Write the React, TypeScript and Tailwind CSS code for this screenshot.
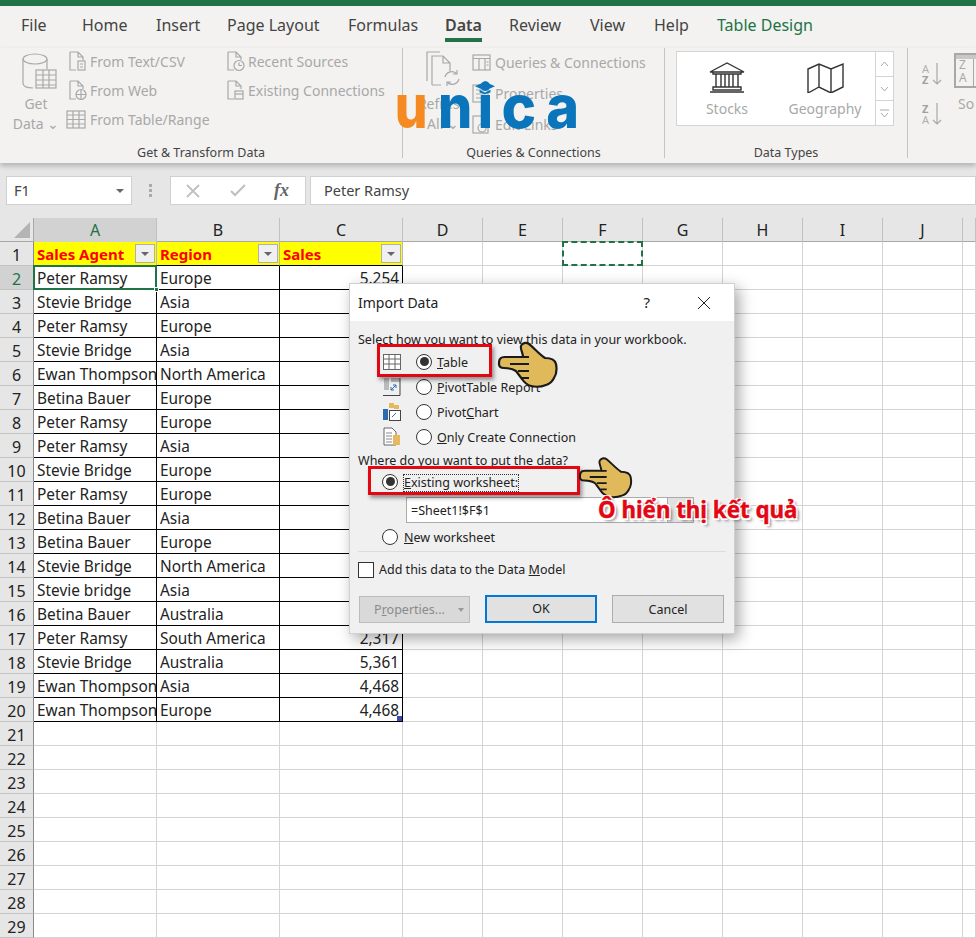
import type { ReactNode } from "react";

const FONT = "font-['Noto_Sans','Open_Sans',sans-serif]";

const GRID = "grid grid-cols-[34px_123px_123px_123px_80px_80px_80px_80px_80px_80px_80px_13px]";
const COLUMNS = ["A", "B", "C", "D", "E", "F", "G", "H", "I", "J", ""];

const ROWS: [string, string, string][] = [
  ["Peter Ramsy", "Europe", "5.254"],
  ["Stevie Bridge", "Asia", ""],
  ["Peter Ramsy", "Europe", ""],
  ["Stevie Bridge", "Asia", ""],
  ["Ewan Thompson", "North America", ""],
  ["Betina Bauer", "Europe", ""],
  ["Peter Ramsy", "Europe", ""],
  ["Peter Ramsy", "Asia", ""],
  ["Stevie Bridge", "Europe", ""],
  ["Peter Ramsy", "Europe", ""],
  ["Betina Bauer", "Asia", ""],
  ["Betina Bauer", "Europe", ""],
  ["Stevie Bridge", "North America", ""],
  ["Stevie bridge", "Asia", ""],
  ["Betina Bauer", "Australia", ""],
  ["Peter Ramsy", "South America", "2,317"],
  ["Stevie Bridge", "Australia", "5,361"],
  ["Ewan Thompson", "Asia", "4,468"],
  ["Ewan Thompson", "Europe", "4,468"],
];

const EMPTY_COLUMNS = ["D", "E", "F", "G", "H", "I", "J", "K"];
const ROW_COUNT = 29;

const TABS = [
  { label: "File", width: "w-[61px]" },
  { label: "Home", width: "w-[74px]" },
  { label: "Insert", width: "w-[71px]" },
  { label: "Page Layout", width: "w-[121px]" },
  { label: "Formulas", width: "w-[97px]" },
  { label: "Data", width: "w-[64px]", active: true },
  { label: "Review", width: "w-[81px]" },
  { label: "View", width: "w-[64px]" },
  { label: "Help", width: "w-[63px]" },
  { label: "Table Design", width: "w-[110px]", accent: true },
];

const LOGO_LETTERS = [
  { letter: "u", width: "w-[44px]", color: "text-[#f58a23]", scale: "scale-x-[0.86]" },
  { letter: "n", width: "w-[44px]", color: "", scale: "scale-x-[0.9]" },
  { letter: "i", width: "w-[16px]", color: "", scale: "scale-x-[0.9]" },
  { letter: "c", width: "w-[51px]", color: "", scale: "scale-x-[0.97]" },
  { letter: "a", width: "w-[38px]", color: "", scale: "scale-x-[0.93]" },
];

function PageIcon({ children }: { children?: ReactNode }) {
  return (
    <svg width="20" height="21" viewBox="0 0 20 21" fill="none" stroke="#a8a8a8" strokeWidth="1.2" className="shrink-0">
      <path d="M2 1h8l5 5v3M10 1v5h5M2 1v18h6" />
      {children}
    </svg>
  );
}

function RibbonItem({ icon, label }: { icon: ReactNode; label: string }) {
  return (
    <div className="flex items-center h-[29px] gap-[2px] text-[14px] text-[#a8a8a8] whitespace-nowrap">
      {icon}
      <span>{label}</span>
    </div>
  );
}

function GroupLabel({ children }: { children: ReactNode }) {
  return <div className="text-center text-[12.5px] leading-4 text-[#444] shrink-0">{children}</div>;
}

function Hand({ className }: { className: string }) {
  return (
    <svg viewBox="0 0 72 58" className={className}>
      <path
        d="M10 24c1-2 3-2 5-2h18c0-4-3-8-2-11 1-3 5-4 8-2 4 3 10 10 16 14 5 0 10 1 11 6 1 5 0 11-2 14-2 4-4 6-8 7-5 2-11 2-15 1-4-1-7-4-9-7l-6-8c-3-2-8-3-12-3-3 0-5-1-5-4 0-2 0-4 1-5z"
        fill="#e0b95b"
        stroke="#1a1a1a"
        strokeWidth="2.2"
      />
      <path d="M20 29h19M28 36h11M32 43h7M33 22h6" fill="none" stroke="#1a1a1a" strokeWidth="2" />
    </svg>
  );
}

function Radio({ checked }: { checked?: boolean }) {
  return (
    <span className="flex items-center justify-center w-4 h-4 rounded-full border border-[#333] bg-white shrink-0">
      {checked && <span className="w-[9px] h-[9px] rounded-full bg-[#333]" />}
    </span>
  );
}

function ViewOption({ icon, checked, children }: { icon: ReactNode; checked?: boolean; children: ReactNode }) {
  return (
    <div className="flex items-center h-[25px] pl-[33px] text-[#222]">
      <span className="flex justify-center w-[18px] mr-[15px]">{icon}</span>
      <Radio checked={checked} />
      <span className="ml-[5px] mt-[3px]">{children}</span>
    </div>
  );
}

function ImportDialog() {
  return (
    <div className="absolute left-[349px] top-[283px] w-[386px] h-[351px] bg-[#f0f0f0] border border-[#d0d0d0] shadow-[4px_5px_14px_rgba(0,0,0,0.35)] text-[12.5px] text-[#222]">
      <div className="flex items-center h-[37px] bg-white pl-[8px] text-[14px]">
        <span className="flex-1">Import Data</span>
        <span className="mr-[47px] text-[15px]">?</span>
        <svg width="14" height="14" viewBox="0 0 14 14" stroke="#222" className="mr-[23px]">
          <path d="M1 1l12 12M13 1L1 13" />
        </svg>
      </div>

      <div className="pl-[8px] pt-[10px] h-[27px]">Select how you want to view this data in your workbook.</div>
      <div className="mt-[1px]">
        <ViewOption
          checked
          icon={
            <svg width="18" height="16" viewBox="0 0 18 16" fill="#fff" stroke="#666">
              <rect x="0.5" y="0.5" width="17" height="15" />
              <path d="M0 5h18M0 10h18M6 0v16M12 0v16" />
            </svg>
          }
        >
          <u>T</u>able
        </ViewOption>
        <ViewOption
          icon={
            <svg width="18" height="18" viewBox="0 0 18 18" fill="none">
              <rect x="1" y="0" width="5" height="12" fill="#bbb" />
              <rect x="8" y="0" width="9" height="4" fill="#bbb" />
              <path d="M0 17.5h17V0" stroke="#444" />
              <path d="M8 12l5-5M10 7h3v3M8 9v3h3" stroke="#2b6cb0" />
            </svg>
          }
        >
          <u>P</u>ivotTable Report
        </ViewOption>
        <ViewOption
          icon={
            <svg width="18" height="18" viewBox="0 0 18 18" fill="none">
              <rect x="6" y="0" width="5" height="5" fill="#e8b85f" />
              <rect x="0" y="6" width="5" height="11" fill="#2b6cb0" />
              <rect x="11" y="2" width="5" height="4" fill="#e8b85f" />
              <rect x="6.5" y="7.5" width="11" height="10" fill="#fff" stroke="#444" />
              <path d="M9 14l4-4" stroke="#2b6cb0" />
            </svg>
          }
        >
          Pivot<u>C</u>hart
        </ViewOption>
        <ViewOption
          icon={
            <svg width="18" height="19" viewBox="0 0 18 19" fill="none">
              <path d="M1 1h8l4 4v13H1z" fill="#fff" stroke="#666" />
              <path d="M3 6h6M3 9h6M3 12h6M3 15h6" stroke="#888" />
              <rect x="10" y="8" width="7" height="10" fill="#e8b85f" />
            </svg>
          }
        >
          <u>O</u>nly Create Connection
        </ViewOption>
      </div>

      <div className="pl-[8px] h-[20px] leading-[24px]">Where do you want to put the data?</div>
      <div className="flex items-center h-[25px] pl-[32px]">
        <Radio checked />
        <span className="ml-[6px] mt-[3px] outline-1 outline-dotted outline-[#333] leading-[16px]">
          <u>E</u>xisting worksheet:
        </span>
      </div>
      <div className="flex items-center pl-[56px] mt-[3px]">
        <div className="flex items-center w-[262px] h-[26px] bg-white border border-[#aaa] pl-[4px] pt-[2px]">=Sheet1!$F$1</div>
        <div className="w-[26px] h-[26px] bg-[#e1e1e1] border border-l-0 border-[#aaa]" />
      </div>
      <div className="flex items-center h-[28px] pl-[32px]">
        <Radio />
        <span className="ml-[6px] mt-[3px]">
          <u>N</u>ew worksheet
        </span>
      </div>
      <div className="mx-[8px] border-t border-[#dcdcdc]" />
      <div className="flex items-center h-[35px] pl-[8px]">
        <span className="w-4 h-4 border border-[#333] bg-white shrink-0" />
        <span className="ml-[5px] mt-[2px]">
          Add this data to the Data <u>M</u>odel
        </span>
      </div>
      <div className="flex items-center mt-[8px] pl-[9px] gap-[15px]">
        <div className="flex items-center justify-center w-[111px] h-[27px] pt-[2px] bg-[#d9d9d9] border border-[#bcbcbc] text-[#8a8a8a] relative">
          <span className="mr-[10px]">
            P<u>r</u>operties...
          </span>
          <span className="absolute right-[5px] top-[11px] border-x-[3.5px] border-x-transparent border-t-[4px] border-t-[#999]" />
        </div>
        <div className="flex items-center justify-center w-[112px] h-[28px] pt-[1px] bg-[#e1e1e1] border-2 border-[#0078d7]">OK</div>
        <div className="flex items-center justify-center w-[112px] h-[28px] pt-[2px] bg-[#e1e1e1] border border-[#adadad]">Cancel</div>
      </div>
    </div>
  );
}

function Ribbon() {
  return (
    <div className="flex h-[115px] bg-[#f3f2f1] shadow-[0_3px_5px_rgba(0,0,0,0.22)] relative z-10">
      {/* Get & Transform Data */}
      <div className="w-[403px] h-[110px] border-r border-[#c4c4c4] flex flex-col shrink-0">
        <div className="flex h-[97px] shrink-0 pl-[12px]">
          <div className="w-[48px] flex flex-col items-center text-[14px] text-[#a8a8a8] leading-[20px]">
            <svg width="36" height="38" viewBox="0 0 36 38" fill="none" stroke="#a8a8a8" strokeWidth="1.2" className="mt-[4px] ml-[7px]">
              <ellipse cx="13" cy="7" rx="12" ry="5" />
              <path d="M1 7v24c0 3 4 5 10 5M25 7v10" />
              <rect x="14" y="18" width="20" height="18" fill="#f3f2f1" />
              <path d="M14 23h20M14 28h20M14 33h20M21 18v18M27 18v18" />
            </svg>
            <span className="mt-[4px]">Get</span>
            <span className="whitespace-nowrap">Data ⌄</span>
          </div>
          <div className="w-[158px] ml-[8px] -mt-px">
            <RibbonItem
              label="From Text/CSV"
              icon={
                <PageIcon>
                  <rect x="10" y="10" width="7" height="9" />
                  <path d="M12 13h3M12 16h3" />
                </PageIcon>
              }
            />
            <RibbonItem
              label="From Web"
              icon={
                <PageIcon>
                  <circle cx="13" cy="14.5" r="5" />
                  <path d="M8 14.5h10M13 9.5v10" />
                </PageIcon>
              }
            />
            <RibbonItem
              label="From Table/Range"
              icon={
                <svg width="20" height="19" viewBox="0 0 20 19" fill="none" stroke="#a8a8a8" strokeWidth="1.2" className="-ml-[2px] mr-[2px] shrink-0">
                  <rect x="1" y="1" width="18" height="17" />
                  <path d="M1 5h18M1 9.5h18M1 14h18M7 1v17M13 1v17" />
                </svg>
              }
            />
          </div>
          <div className="-mt-px">
            <RibbonItem
              label="Recent Sources"
              icon={
                <PageIcon>
                  <circle cx="13" cy="14.5" r="5" />
                  <path d="M13 11.5v3h3" />
                </PageIcon>
              }
            />
            <RibbonItem
              label="Existing Connections"
              icon={
                <PageIcon>
                  <rect x="9" y="11" width="8" height="8" />
                  <path d="M9 14h8" />
                </PageIcon>
              }
            />
          </div>
        </div>
        <GroupLabel>Get &amp; Transform Data</GroupLabel>
      </div>

      {/* Queries & Connections */}
      <div className="w-[262px] h-[110px] border-r border-[#c4c4c4] flex flex-col shrink-0">
        <div className="flex h-[97px] shrink-0 pl-[20px]">
          <div className="w-[40px] flex flex-col items-center text-[14px] text-[#a8a8a8] leading-[20px]">
            <svg width="36" height="38" viewBox="0 0 36 38" fill="none" stroke="#a8a8a8" strokeWidth="1.2" className="mt-[3px] ml-[2px]">
              <path d="M1 30V1h13M6 34V5h11l7 7v8M6 34h9M17 5v7h7" />
              <path d="M19 26a7 7 0 0 1 12-3M33 28a7 7 0 0 1-12 3M31 19v4h-4M21 35v-4h4" />
            </svg>
            <span className="mt-[5px]">Refresh</span>
            <span>All ⌄</span>
          </div>
          <div className="ml-[9px]">
            <div className="h-[31px]">
              <RibbonItem
                label="Queries & Connections"
                icon={
                  <svg width="20" height="17" viewBox="0 0 20 17" fill="none" stroke="#a8a8a8" strokeWidth="1.2" className="shrink-0 mr-[1px]">
                    <rect x="1" y="1" width="17" height="15" />
                    <path d="M1 4.5h17M7 4.5V16M13 4.5V16M14.5 8h2M14.5 11h2" />
                  </svg>
                }
              />
            </div>
            <div className="h-[31px]">
              <RibbonItem
                label="Properties"
                icon={
                  <svg width="20" height="19" viewBox="0 0 20 19" fill="none" stroke="#a8a8a8" strokeWidth="1.2" className="shrink-0 mr-[1px]">
                    <rect x="1" y="1" width="15" height="17" />
                    <path d="M4 6h9M4 10h9M4 14h9" />
                  </svg>
                }
              />
            </div>
            <RibbonItem
              label="Edit Links"
              icon={
                <svg width="20" height="19" viewBox="0 0 20 19" fill="none" stroke="#a8a8a8" strokeWidth="1.2" className="shrink-0 mr-[1px]">
                  <rect x="1" y="1" width="15" height="17" />
                  <circle cx="10" cy="13" r="4" />
                </svg>
              }
            />
          </div>
        </div>
        <GroupLabel>Queries &amp; Connections</GroupLabel>
      </div>

      {/* Data Types */}
      <div className="w-[243px] h-[110px] border-r border-[#c4c4c4] flex flex-col shrink-0">
        <div className="h-[97px] shrink-0 pl-[11px] pt-[3px]">
          <div className="flex w-[218px] h-[75px] bg-white border border-[#d4d4d4] text-[14px] text-[#a8a8a8]">
            <div className="flex w-[198px]">
              <div className="w-[98px] flex flex-col items-center pt-[10px] pl-[2px]">
                <svg width="36" height="31" viewBox="0 0 36 31" fill="none" stroke="#333" strokeWidth="1.4">
                  <path d="M1 10L18 1l17 9zM4 10v2h28v-2M7 12v13M12 12v13M16 12v13M20 12v13M24 12v13M29 12v13M4 25h28v3H4zM1 30h34" />
                </svg>
                <span className="mt-[5px]">Stocks</span>
              </div>
              <div className="w-[100px] flex flex-col items-center pt-[10px]">
                <svg width="37" height="31" viewBox="0 0 37 31" fill="none" stroke="#333" strokeWidth="1.4">
                  <path d="M1 7l11-5 12 5 12-5v23l-12 6-12-6-11 6zM12 2v23M24 7v24" />
                </svg>
                <span className="mt-[5px]">Geography</span>
              </div>
            </div>
            <div className="flex flex-col w-[18px] border-l border-[#d4d4d4] text-[#999]">
              <div className="flex-1 border-b border-[#d4d4d4] flex items-center justify-center">
                <svg width="9" height="6" viewBox="0 0 9 6" fill="none" stroke="#aaa"><path d="M1 5l3.5-4L8 5" /></svg>
              </div>
              <div className="flex-1 border-b border-[#d4d4d4] flex items-center justify-center">
                <svg width="9" height="6" viewBox="0 0 9 6" fill="none" stroke="#aaa"><path d="M1 1l3.5 4L8 1" /></svg>
              </div>
              <div className="flex-1 flex items-center justify-center">
                <svg width="9" height="9" viewBox="0 0 9 9" fill="none" stroke="#aaa"><path d="M0 1h9M1 4l3.5 4L8 4" /></svg>
              </div>
            </div>
          </div>
        </div>
        <GroupLabel>Data Types</GroupLabel>
      </div>

      {/* Sort & Filter, cut off by the window */}
      <div className="flex pl-[14px] overflow-hidden">
        <div className="w-[32px] shrink-0 pt-[14px]">
          <svg width="22" height="24" viewBox="0 0 22 24" fill="none">
            <text x="0" y="11" fontSize="11" fontFamily="Noto Sans" fill="#b0b0b0">A</text>
            <text x="0" y="22" fontSize="11" fontWeight="700" fontFamily="Noto Sans" fill="#a0a0a0">Z</text>
            <path d="M15 1v21M11 18l4 4 4-4" stroke="#a8a8a8" strokeWidth="1.2" />
          </svg>
          <svg width="22" height="24" viewBox="0 0 22 24" fill="none" className="mt-[16px]">
            <text x="0" y="11" fontSize="11" fontWeight="700" fontFamily="Noto Sans" fill="#a0a0a0">Z</text>
            <text x="0" y="22" fontSize="11" fontFamily="Noto Sans" fill="#b0b0b0">A</text>
            <path d="M15 1v21M11 18l4 4 4-4" stroke="#a8a8a8" strokeWidth="1.2" />
          </svg>
        </div>
        <div className="pt-[5px] text-[14px] text-[#a8a8a8] leading-[20px] shrink-0">
          <div className="w-[30px] h-[35px] border-2 border-[#a8a8a8] border-r-0 relative">
            <div className="h-[4px] bg-[#c8c8c8]" />
            <div className="text-[12px] leading-[12px] pl-[3px]">Z</div>
            <div className="text-[12px] leading-[13px] pl-[3px]">A</div>
            <div className="absolute left-[17px] top-[4px] bottom-0 border-l border-[#a8a8a8]" />
          </div>
          <div className="pl-[4px] mt-[6px]">So</div>
        </div>
      </div>
    </div>
  );
}

function Logo() {
  return (
    <div className="absolute left-[389px] top-[70px] z-20 flex font-['Inter',sans-serif] font-extrabold text-[60px] leading-[72px] text-[#0b75bb]">
      {LOGO_LETTERS.map((item) => (
        <span key={item.letter} className={`flex justify-center ${item.width} ${item.color}`}>
          <span className={`inline-block ${item.scale}`}>{item.letter}</span>
        </span>
      ))}
      <svg width="20" height="14" viewBox="0 0 22 14" className="absolute left-[86px] top-[11px]" fill="#0b75bb">
        <path d="M11 0l11 5-11 5L0 5zM5 9l6 3 6-3v3l-6 2-6-2z" />
      </svg>
    </div>
  );
}

function Sheet() {
  return (
    <div className="bg-white text-[15.4px] text-[#222] flex-1">
      <div className={`${GRID} h-6 bg-[#e6e6e6] border-b border-[#a8a8a8] text-[16px]`}>
        <div className="relative border-r border-[#a8a8a8]">
          <svg width="16" height="16" viewBox="0 0 16 16" className="absolute left-[14px] top-[4px]">
            <path d="M16 0v16H0z" fill="#b4b4b4" />
          </svg>
        </div>
        {COLUMNS.map((col, i) => (
          <div
            key={col + i}
            className={`flex items-center justify-center border-r border-[#c0c0c0] ${
              i === 0 ? "bg-[#d2d2d2] text-[#217346]" : ""
            }`}
          >
            {col}
          </div>
        ))}
      </div>

      {Array.from({ length: ROW_COUNT }, (_, r) => {
        const num = r + 1;
        const data = r >= 1 && r <= 19 ? ROWS[r - 1] : null;
        const headerRow = r === 0;
        const inTable = headerRow || data;
        const cellBorder = inTable ? "border-black" : "border-[#d4d4d4]";
        return (
          <div key={num} className={`${GRID} grid-rows-[24px] h-6 leading-[18px]`}>
            <div
              className={`flex items-center justify-center pt-[2px] border-r border-b border-r-[#8a8a8a] border-b-[#c4c4c4] text-[16px] ${
                num === 2 ? "bg-[#d2d2d2] text-[#217346]" : "bg-[#e6e6e6]"
              }`}
            >
              {num}
            </div>

            {headerRow &&
              ["Sales Agent", "Region", "Sales"].map((title) => (
                <div
                  key={title}
                  className="relative flex items-center pl-[3px] bg-[#ffff00] border-r border-b border-r-[#b8b8b8] border-b-black font-bold text-[15px] text-[#ff0000]"
                >
                  {title}
                  <span className="absolute right-[1px] top-[2px] flex items-center justify-center w-[20px] h-[19px] bg-[#f0f0f0] border border-[#b0b0b0]">
                    <span className="border-x-[4px] border-x-transparent border-t-[4px] border-t-[#666]" />
                  </span>
                </div>
              ))}

            {!headerRow && (
              <>
                <div className={`relative flex items-center pl-[3px] pt-[3px] border-r border-b ${cellBorder} whitespace-nowrap`}>
                  <span className="block w-[119px] h-[22px] leading-[22px] shrink-0 overflow-hidden">{data?.[0]}</span>
                  {num === 2 && (
                    <>
                      <span className="absolute -left-px -top-px -right-px -bottom-px border-2 border-[#217346]" />
                      <span className="absolute -right-[3px] -bottom-[3px] w-[5px] h-[5px] bg-[#217346] border border-white z-10" />
                    </>
                  )}
                </div>
                <div className={`flex items-center pl-[3px] pt-[3px] border-r border-b ${cellBorder} whitespace-nowrap`}>{data?.[1]}</div>
                <div className={`relative flex items-center justify-end pr-[3px] pt-[3px] border-r border-b ${cellBorder}`}>
                  {data?.[2]}
                  {num === 20 && <span className="absolute right-0 bottom-0 w-[5px] h-[5px] bg-[#3f48a8]" />}
                </div>
              </>
            )}

            {EMPTY_COLUMNS.map((col) => (
              <div key={col} className="relative border-r border-b border-[#d4d4d4]">
                {headerRow && col === "F" && (
                  <span className="absolute -left-px -top-px -right-px -bottom-px border-2 border-dashed border-[#217346]" />
                )}
              </div>
            ))}
          </div>
        );
      })}
    </div>
  );
}

export default function App() {
  return (
    <div className={`relative w-[976px] h-[938px] overflow-hidden bg-white flex flex-col ${FONT}`}>
      <div className="h-1.5 bg-[#217346]" />

      <div className="flex h-[42px] pl-[21px] pt-[7px] bg-[#f3f2f1] text-[16px] text-[#444]">
        {TABS.map((tab) => (
          <div key={tab.label} className={`${tab.width} shrink-0 whitespace-nowrap`}>
            <div className={`inline-block h-[28px] leading-[22px] ${tab.active ? "font-semibold border-b-[4px] border-[#217346]" : ""} ${tab.accent ? "text-[#217346]" : ""}`}>
              {tab.label}
            </div>
          </div>
        ))}
      </div>

      <Ribbon />

      <div className="flex items-center h-[55px] bg-[#e6e6e6] pl-[6px] text-[14.5px] text-[#444]">
        <div className="relative flex items-center w-[126px] h-[29px] bg-white border border-[#d0d0d0] pl-[7px]">
          F1
          <span className="absolute right-[7px] top-[12px] border-x-[4px] border-x-transparent border-t-[4px] border-t-[#666]" />
        </div>
        <div className="flex flex-col gap-[2px] ml-[17px] w-[21px]">
          <span className="w-[3px] h-[3px] bg-[#aaa]" />
          <span className="w-[3px] h-[3px] bg-[#aaa]" />
          <span className="w-[3px] h-[3px] bg-[#aaa]" />
        </div>
        <div className="flex items-center w-[136px] h-[29px] bg-white border border-[#d0d0d0]">
          <svg width="14" height="14" viewBox="0 0 14 14" stroke="#c0c0c0" strokeWidth="1.8" className="ml-[15px]">
            <path d="M1 1l12 12M13 1L1 13" />
          </svg>
          <svg width="16" height="13" viewBox="0 0 16 13" fill="none" stroke="#c0c0c0" strokeWidth="2.2" className="ml-[30px]">
            <path d="M1 7l4 4L15 1" />
          </svg>
          <span className="ml-[28px] font-['Liberation_Serif',serif] italic font-bold text-[18px] text-[#666]">fx</span>
        </div>
        <div className="flex items-center flex-1 h-[29px] ml-[4px] bg-white border border-[#d0d0d0] pl-[13px]">Peter Ramsy</div>
      </div>

      <Sheet />

      <Logo />
      <ImportDialog />

      <div className="absolute left-[377px] top-[344px] w-[115px] h-[33px] border-[3px] border-[#e30613] shadow-[2px_3px_4px_rgba(0,0,0,0.4)]" />
      <div className="absolute left-[368px] top-[466px] w-[212px] h-[29px] border-[3px] border-[#e30613] shadow-[2px_3px_4px_rgba(0,0,0,0.4)]" />
      <Hand className="absolute left-[490px] top-[335px] w-[72px] h-[58px]" />
      <Hand className="absolute left-[572px] top-[451px] w-[64px] h-[52px]" />
      <div className="absolute left-[598px] top-[495px] text-[22.3px] leading-[30px] font-bold text-[#e30613] whitespace-nowrap [-webkit-text-stroke:0.4px_#e30613] [text-shadow:-1.5px_-1.5px_0_#fff,1.5px_-1.5px_0_#fff,-1.5px_1.5px_0_#fff,1.5px_1.5px_0_#fff,3px_3px_3px_rgba(0,0,0,0.45)]">
        Ô hiển thị kết quả
      </div>
    </div>
  );
}
